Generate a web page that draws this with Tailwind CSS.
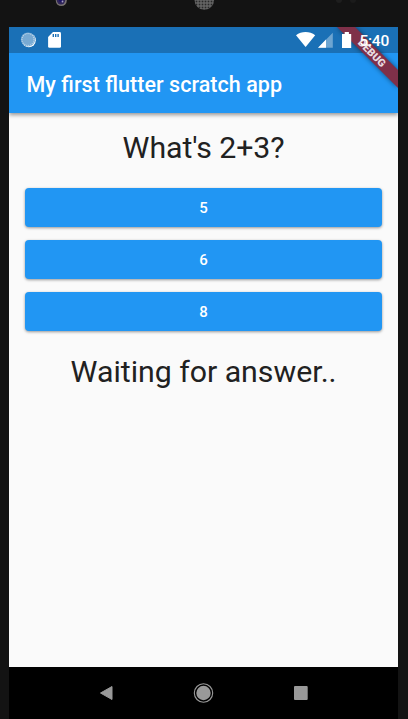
<!DOCTYPE html>
<html lang="en">
<head>
<meta charset="utf-8">
<title>My first flutter scratch app</title>
<script src="https://cdn.jsdelivr.net/npm/@tailwindcss/browser@4"></script>
</head>
<body class="h-[719px] w-[408px] overflow-hidden bg-[#131313] font-['Roboto',sans-serif]">
<div class="flex h-[719px] w-[408px] flex-col">
  <!-- Device bezel with camera and speaker -->
  <svg class="block h-[27px] w-full shrink-0" viewBox="0 0 408 27">
    <defs>
      <pattern id="mesh" width="3" height="3" patternUnits="userSpaceOnUse"><rect width="3" height="3" fill="#6b6b6b"/><rect x=".6" y=".6" width="1.8" height="1.8" fill="#292929"/></pattern>
    </defs>
    <circle cx="61.3" cy=".5" r="5.5" fill="#77716f"/>
    <circle cx="61" cy=".2" r="4.2" fill="#302558"/>
    <circle cx="60.8" cy=".5" r="1.8" fill="#1b1263"/>
    <circle cx="62.5" cy="1.5" r=".9" fill="#a7a0c4"/>
    <circle cx="204.3" cy="0" r="9.8" fill="url(#mesh)"/>
    <circle cx="339" cy="0" r="3" fill="#1e1e1e"/>
    <circle cx="353" cy="0" r="3" fill="#1b1b1b"/>
  </svg>
  <main class="relative mr-[10px] ml-[9px] flex flex-1 flex-col overflow-hidden bg-[#fafafa]">
    <header class="z-10 shrink-0 bg-[#2196f3] shadow-[0_2px_4px_rgba(0,0,0,0.4)]">
      <div class="h-[26px] bg-[#1a70b6]">
        <svg class="block h-[26px] w-[389px]" viewBox="9 27 389 26">
          <circle cx="28.8" cy="40.2" r="7" fill="#fff"/>
          <circle cx="28" cy="39.5" r="7.1" fill="#78aad3"/>
          <circle cx="28" cy="39.5" r="6" fill="none" stroke="#bcd6ea" stroke-width="1.2" stroke-dasharray="1 1"/>
          <path d="M53 32h6.6q1.4 0 1.4 1.4v13q0 1.4-1.4 1.4H49.5q-1.4 0-1.4-1.4V37z" fill="#fff"/>
          <path d="M53.3 34v3m2.4-3v3m2.4-3v3" stroke="#1a70b6" stroke-width="1.4"/>
          <path d="M296 35.2c5.5-4.2 13.6-4.2 19.2 0L305.6 47z" fill="#fff"/>
          <path d="M318 47.7L332.8 32.8V47.7z" fill="#6ea5d1"/>
          <path d="M318 47.7L326 39.5V47.7z" fill="#fff"/>
        </svg>
      </div>
      <h1 class="flex h-[60px] items-center pt-[2px] pl-[18px] text-white"><svg class="h-[32px] w-[270px] overflow-visible" viewBox="0 0 270 32"><text x="-.5" y="24" textLength="255.5" fill="#fff" font-size="21.5" font-weight="500">My first flutter scratch app</text></svg></h1>
    </header>
    <!-- Debug ribbon, battery and clock -->
    <svg class="absolute top-0 left-0 z-20 h-[86px] w-[389px]" viewBox="9 27 389 86">
      <defs><filter id="soft" x="-30%" y="-30%" width="160%" height="160%"><feGaussianBlur stdDeviation="2.8"/></filter></defs>
      <path d="M337 27h18L398 70v18z" fill="#000" opacity=".5" filter="url(#soft)"/>
      <path d="M337 27h18L398 70v18z" fill="#7f3049"/>
      <text transform="translate(371.9 52.9) rotate(45)" y="3.6" text-anchor="middle" textLength="34.5" lengthAdjust="spacingAndGlyphs" font-size="10.5" font-weight="900" fill="#e9dde1">DEBUG</text>
      <path d="M342 34h2.7v-2h4.2v2h2.3v14H342z" fill="#fff"/>
      <text x="359.5" y="45.8" textLength="29.7" font-size="15.5" font-weight="500" fill="#fff">5:40</text>
    </svg>
    <section class="flex flex-1 flex-col px-[16px] text-[#212121]">
      <svg class="h-[75px] w-[357px] shrink-0" viewBox="25 113 357 75"><text x="203.6" y="158" text-anchor="middle" textLength="162" font-size="30.3" fill="#212121">What's 2+3?</text></svg>
      <div class="flex flex-col gap-[13px] text-[15px] font-medium text-white">
        <button class="h-[39px] rounded-[4px] bg-[#2196f3] pt-[2px] shadow-[0_1px_3px_rgba(0,0,0,0.4)]">5</button>
        <button class="h-[39px] rounded-[4px] bg-[#2196f3] pt-[2px] shadow-[0_1px_3px_rgba(0,0,0,0.4)]">6</button>
        <button class="h-[39px] rounded-[4px] bg-[#2196f3] pt-[2px] shadow-[0_1px_3px_rgba(0,0,0,0.4)]">8</button>
      </div>
      <svg class="h-[75px] w-[357px] shrink-0" viewBox="25 331 357 75"><text x="203.6" y="382" text-anchor="middle" textLength="266" font-size="30.3" fill="#212121">Waiting for answer..</text></svg>
    </section>
    <nav class="h-[52px] shrink-0 bg-black">
      <svg class="block h-[52px] w-[389px]" viewBox="9 667 389 52">
        <path d="M100.5 693L112 686.5v13z" fill="#999" stroke="#999" stroke-width="1" stroke-linejoin="round"/>
        <circle cx="203.5" cy="693" r="9.2" fill="none" stroke="#999" stroke-width="1.1"/>
        <circle cx="203.5" cy="693" r="7.2" fill="#999"/>
        <rect x="294" y="686" width="13.7" height="14" rx="1" fill="#999"/>
      </svg>
    </nav>
  </main>
</div>
</body>
</html>
